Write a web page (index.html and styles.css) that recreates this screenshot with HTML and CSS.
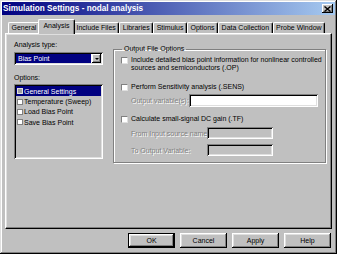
FILE: index.html
```html
<!DOCTYPE html>
<html lang="en">
<head>
    <meta charset="UTF-8">
    <title>Simulation Settings - nodal analysis</title>
    <link rel="stylesheet" href="styles.css">
</head>
<body>
    <div class="window">
        <div class="titlebar">
            <span class="title">Simulation Settings - nodal analysis</span>
            <span class="close">
                <svg width="7" height="6" viewBox="0 0 7 6"><path d="M0.5 0.5 L6.5 5.5 M6.5 0.5 L0.5 5.5" stroke="#000" stroke-width="1.4"/></svg>
            </span>
        </div>

        <div class="tabs">
            <div class="tab">General</div>
            <div class="tab active">Analysis</div>
            <div class="tab">Include Files</div>
            <div class="tab">Libraries</div>
            <div class="tab">Stimulus</div>
            <div class="tab">Options</div>
            <div class="tab">Data Collection</div>
            <div class="tab">Probe Window</div>
        </div>

        <div class="panel">
            <div class="left">
                <div class="label">Analysis type:</div>
                <div class="combo">
                    <span class="combo-value">Bias Point</span>
                    <span class="combo-btn"><span class="arrow"></span></span>
                </div>
                <div class="label options-label">Options:</div>
                <div class="listbox">
                    <div class="item selected"><span class="lbox checked"></span>General Settings</div>
                    <div class="item"><span class="lbox"></span>Temperature (Sweep)</div>
                    <div class="item"><span class="lbox"></span>Load Bias Point</div>
                    <div class="item"><span class="lbox"></span>Save Bias Point</div>
                </div>
            </div>

            <fieldset class="group">
                <legend>Output File Options</legend>
                <div class="check-row first">
                    <span class="box"></span>
                    <span class="check-text">Include detailed bias point information for nonlinear controlled<br>sources and semiconductors (.OP)</span>
                </div>
                <div class="check-row sens">
                    <span class="box"></span>
                    <span class="check-text">Perform Sensitivity analysis (.SENS)</span>
                </div>
                <div class="field-row out-row">
                    <span class="field-label disabled out-label">Output variable(s):</span>
                    <span class="field out-field"></span>
                </div>
                <div class="check-row tf">
                    <span class="box"></span>
                    <span class="check-text">Calculate small-signal DC gain (.TF)</span>
                </div>
                <div class="field-row from-row">
                    <span class="field-label disabled tf-label">From Input source name:</span>
                    <span class="field off tf-field"></span>
                </div>
                <div class="field-row to-row">
                    <span class="field-label disabled tf-label">To Output Variable:</span>
                    <span class="field off tf-field"></span>
                </div>
            </fieldset>
        </div>

        <div class="buttons">
            <div class="btn default">OK</div>
            <div class="btn">Cancel</div>
            <div class="btn">Apply</div>
            <div class="btn">Help</div>
        </div>
    </div>
</body>
</html>
```

FILE: styles.css
```css
body {
    margin: 0;
    font-family: 'Liberation Sans', Arial, sans-serif;
    font-size: 7px;
    color: #000;
    background: #c0c0c0;
}
.window {
    width: 337px;
    height: 254px;
    box-sizing: border-box;
    padding: 2px;
    background: #c0c0c0;
    box-shadow: inset -1px -1px #000, inset 1px 1px #dfdfdf, inset -2px -2px #808080, inset 2px 2px #fff;
    display: flex;
    flex-direction: column;
}
.titlebar {
    height: 13px;
    flex: none;
    background: linear-gradient(to right, #000080, #a6caf0);
    display: flex;
    align-items: center;
    justify-content: space-between;
    padding: 0 2px 0 1px;
    color: #fff;
    font-weight: bold;
    font-size: 8.2px;
}
.close {
    width: 11px;
    height: 9px;
    box-sizing: border-box;
    background: #c0c0c0;
    box-shadow: inset -1px -1px #000, inset 1px 1px #fff, inset -2px -2px #808080;
    display: flex;
    align-items: center;
    justify-content: center;
}
.close svg {
    display: block;
}

/* tabs */
.tabs {
    display: flex;
    align-items: flex-end;
    height: 14px;
    flex: none;
    margin-top: 4px;
    padding-left: 6px;
}
.tab {
    height: 11px;
    box-sizing: border-box;
    line-height: 10px;
    padding: 0 2.5px;
    border: 1px solid #000;
    border-color: #fff #000 transparent #fff;
    border-bottom: none;
    border-radius: 2px 2px 0 0;
    box-shadow: inset -1px 0 #808080;
    white-space: nowrap;
}
.tab.active {
    height: 15px;
    line-height: 12px;
    margin: 0 -2px -1px;
    padding: 0 4.5px;
    position: relative;
    z-index: 1;
    background: #c0c0c0;
}

/* panel */
.panel {
    flex: none;
    height: 196px;
    margin: 0 3px;
    box-sizing: border-box;
    border: 1px solid;
    border-color: #fff #000 #000 #fff;
    box-shadow: inset -1px -1px #808080, inset 1px 1px #dfdfdf;
    display: flex;
    align-items: flex-start;
    padding: 7px 0 0 8px;
}
.left {
    width: 89px;
    flex: none;
}
.label {
    line-height: 8px;
}
.options-label {
    margin-top: 9px;
}
.combo {
    margin-top: 3px;
    height: 13px;
    box-sizing: border-box;
    padding: 2px;
    background: #fff;
    box-shadow: inset 1px 1px #808080, inset -1px -1px #fff, inset 2px 2px #000, inset -2px -2px #dfdfdf;
    display: flex;
}
.combo-value {
    flex: 1;
    background: #000080;
    color: #fff;
    line-height: 9px;
    padding-left: 2px;
    margin-right: 1px;
}
.combo-btn {
    width: 9px;
    background: #c0c0c0;
    box-shadow: inset -1px -1px #000, inset 1px 1px #fff, inset -2px -2px #808080;
    display: flex;
    align-items: center;
    justify-content: center;
}
.arrow {
    width: 0;
    height: 0;
    border-left: 2px solid transparent;
    border-right: 2px solid transparent;
    border-top: 2px solid #000;
}
.listbox {
    margin-top: 2px;
    height: 75px;
    box-sizing: border-box;
    padding: 2px;
    background: #c0c0c0;
    box-shadow: inset 1px 1px #808080, inset -1px -1px #fff, inset 2px 2px #000, inset -2px -2px #dfdfdf;
}
.item {
    display: flex;
    align-items: center;
    height: 10.4px;
    white-space: nowrap;
}
.item.selected {
    background: #000080;
    color: #fff;
}
.lbox {
    width: 6px;
    height: 6px;
    box-sizing: border-box;
    margin: 0 1px 0 1px;
    background: #fff;
    border: 1px solid #808080;
}
.lbox.checked {
    background: #a0a0a0;
    border-color: #dfdfdf;
}

/* output file options */
.group {
    margin: 4px 0 0 10px;
    width: 213px;
    box-sizing: border-box;
    padding: 0 0 6px 7px;
    border: 1px solid #808080;
    box-shadow: inset 1px 1px #fff, 1px 1px #fff;
    min-width: 0;
}
.group legend {
    padding: 0 2px;
    margin-left: 1px;
    line-height: 8px;
}
.check-row {
    display: flex;
    align-items: flex-start;
}
.check-row.first {
    margin-top: 3px;
}
.check-row.sens {
    margin-top: 11px;
}
.check-row.tf {
    margin-top: 8px;
}
.box {
    width: 7px;
    height: 7px;
    box-sizing: border-box;
    flex: none;
    margin-top: 1px;
    background: #fff;
    border: 1px solid;
    border-color: #808080 #dfdfdf #dfdfdf #808080;
}
.check-text {
    margin-left: 3px;
    line-height: 8px;
    white-space: nowrap;
}
.field-row {
    display: flex;
    align-items: center;
    padding-left: 10px;
}
.out-row {
    margin-top: 3px;
}
.from-row {
    margin-top: 4px;
}
.to-row {
    margin-top: 5px;
}
.field-label {
    flex: none;
    white-space: nowrap;
}
.disabled {
    color: #808080;
    text-shadow: 1px 1px #fff;
}
.out-label {
    width: 58px;
}
.tf-label {
    width: 76px;
}
.field {
    flex: none;
    height: 13px;
    box-sizing: border-box;
    background: #fff;
    box-shadow: inset 1px 1px #808080, inset -1px -1px #fff, inset 2px 2px #000, inset -2px -2px #dfdfdf;
}
.field.off {
    height: 12px;
    background: #c0c0c0;
}
.out-field {
    width: 129px;
}
.tf-field {
    width: 66px;
}

/* buttons */
.buttons {
    display: flex;
    justify-content: flex-end;
    gap: 5px;
    margin-top: 4px;
    padding-right: 4px;
}
.btn {
    width: 47px;
    height: 15px;
    box-sizing: border-box;
    line-height: 15px;
    text-align: center;
    box-shadow: inset -1px -1px #000, inset 1px 1px #fff, inset -2px -2px #808080, inset 2px 2px #dfdfdf;
}
.btn.default {
    border: 1px solid #000;
    line-height: 13px;
}
```
